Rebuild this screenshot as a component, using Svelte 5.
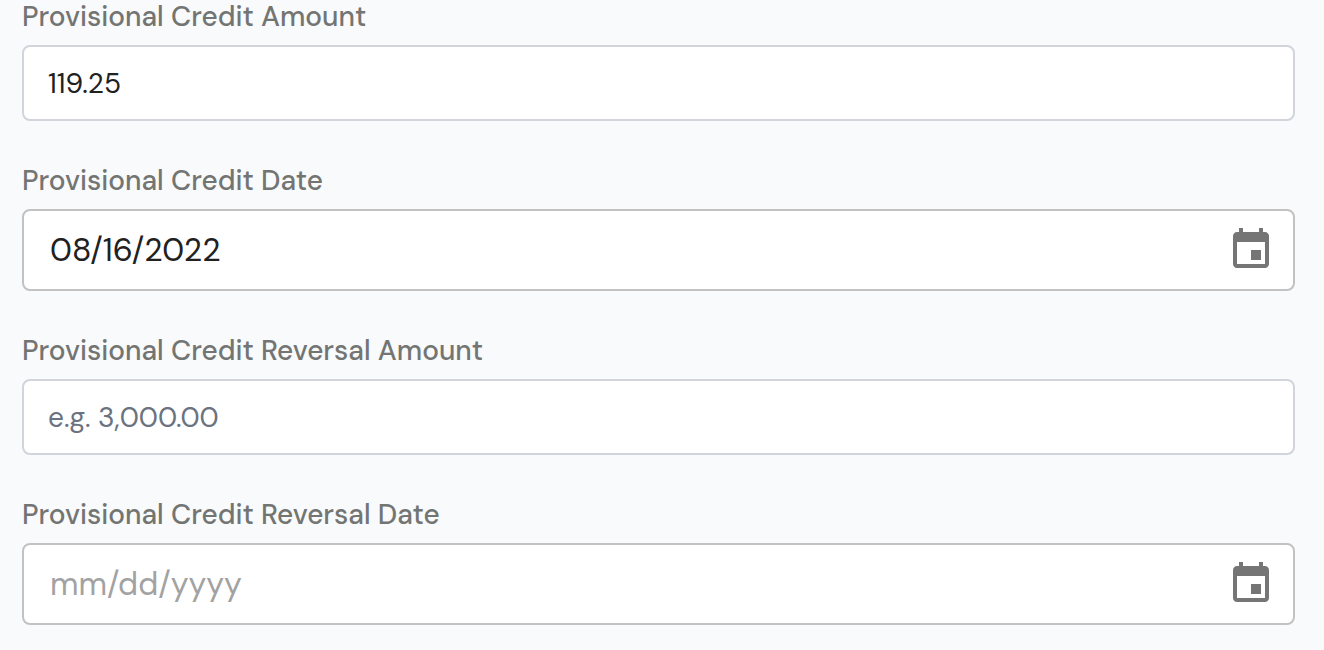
<script>
  let fields = [
    {id: "credit-amount", label: "Provisional Credit Amount", type: "amount", value: "119.25", placeholder: "e.g. 3,000.00"},
    {id: "credit-date", label: "Provisional Credit Date", type: "date", value: "08/16/2022", placeholder: "mm/dd/yyyy"},
    {id: "reversal-amount", label: "Provisional Credit Reversal Amount", type: "amount", value: "", placeholder: "e.g. 3,000.00"},
    {id: "reversal-date", label: "Provisional Credit Reversal Date", type: "date", value: "", placeholder: "mm/dd/yyyy"}
  ];
</script>

<form>
  {#each fields as field}
    <div class="field">
      <label for={field.id}>{field.label}</label>
      <div class="control {field.type}">
        <input
        id={field.id}
        type="text"
        placeholder={field.placeholder}
        bind:value={field.value}
        />
        {#if field.type === "date"}
          <button type="button" aria-label="Choose date">
            <svg viewBox="0 0 24 24" aria-hidden="true">
              <path d="M17 12h-5v5h5v-5zM16 1v2H8V1H6v2H5c-1.11 0-1.99.9-1.99 2L3 19c0 1.1.89 2 2 2h14c1.1 0 2-.9 2-2V5c0-1.1-.9-2-2-2h-1V1h-2zm3 18H5V8h14v11z"/>
            </svg>
          </button>
        {/if}
      </div>
    </div>
  {/each}
</form>

<style>
:global(body){
  background-color: #f9fafc;
}
form{
  display: flex;
  flex-direction: column;
  gap: 48px;
  padding: 5px 29px 24px 22px;
  font-family: "DM Sans", Lato, sans-serif;
}
.field{
  display: flex;
  flex-direction: column;
  gap: 16px;
}
label{
  color: #737573;
  font-size: 28px;
  font-weight: 500;
  line-height: 24px;
}
.control{
  display: flex;
  align-items: center;
  box-sizing: border-box;
  height: 76px;
  border: 2px solid #d1d5db;
  border-radius: 8px;
  background-color: #fff;
}
.control.date{
  height: 82px;
  padding-right: 18px;
  border-color: #c2c2c2;
}
input{
  flex: 1;
  min-width: 0;
  height: 100%;
  box-sizing: border-box;
  padding: 0 24px;
  border: 0;
  outline: 0;
  background: none;
  color: #212121;
  font-family: inherit;
  font-size: 28px;
}
.date input{
  padding: 0 26px;
  font-size: 32px;
}
input::placeholder{
  color: #6b7280;
  opacity: 1;
}
.date input::placeholder{
  color: #a2a2a2;
}
button{
  display: flex;
  padding: 0;
  border: 0;
  background: none;
  color: #757575;
  cursor: pointer;
}
svg{
  width: 48px;
  height: 48px;
  fill: currentColor;
}
</style>
